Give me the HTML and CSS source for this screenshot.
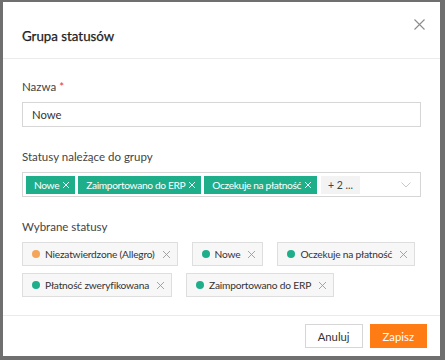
FILE: index.html
```html
<!DOCTYPE html>
<html lang="pl">
<head>
<meta charset="utf-8">
<link rel="stylesheet" href="styles.css">
</head>
<body>
<div class="modal">
  <div class="header">
    <h1 class="title">Grupa statusów</h1>
    <svg class="close" width="11" height="11" viewBox="0 0 11 11"><path d="M0.5 0.5L10.5 10.5M10.5 0.5L0.5 10.5" stroke="#8c8c8c" stroke-width="1.1" fill="none"/></svg>
  </div>
  <div class="body">
    <div class="field">
      <div class="label">Nazwa <span class="req">*</span></div>
      <div class="input">Nowe</div>
    </div>
    <div class="field">
      <div class="label">Statusy należące do grupy</div>
      <div class="select">
        <span class="tag">Nowe<svg class="tx" width="6" height="6" viewBox="0 0 6 6"><path d="M0 0L6 6M6 0L0 6" stroke="#fff" stroke-width="0.9"/></svg></span>
        <span class="tag">Zaimportowano do ERP<svg class="tx" width="6" height="6" viewBox="0 0 6 6"><path d="M0 0L6 6M6 0L0 6" stroke="#fff" stroke-width="0.9"/></svg></span>
        <span class="tag">Oczekuje na płatność<svg class="tx" width="6" height="6" viewBox="0 0 6 6"><path d="M0 0L6 6M6 0L0 6" stroke="#fff" stroke-width="0.9"/></svg></span>
        <span class="more">+ 2 ...</span>
        <svg class="chev" width="10" height="6" viewBox="0 0 10 6"><path d="M0.5 0.5L5 5L9.5 0.5" stroke="#c8c8c8" stroke-width="1" fill="none"/></svg>
      </div>
    </div>
    <div class="field last">
      <div class="label">Wybrane statusy</div>
      <div class="chips">
        <span class="chip"><i class="dot orange"></i>Niezatwierdzone (Allegro)<svg class="cx" width="7" height="7" viewBox="0 0 7 7"><path d="M0 0L7 7M7 0L0 7" stroke="#9a9a9a" stroke-width="0.9"/></svg></span>
        <span class="chip"><i class="dot"></i>Nowe<svg class="cx" width="7" height="7" viewBox="0 0 7 7"><path d="M0 0L7 7M7 0L0 7" stroke="#9a9a9a" stroke-width="0.9"/></svg></span>
        <span class="chip"><i class="dot"></i>Oczekuje na płatność<svg class="cx" width="7" height="7" viewBox="0 0 7 7"><path d="M0 0L7 7M7 0L0 7" stroke="#9a9a9a" stroke-width="0.9"/></svg></span>
        <span class="chip"><i class="dot"></i>Płatność zweryfikowana<svg class="cx" width="7" height="7" viewBox="0 0 7 7"><path d="M0 0L7 7M7 0L0 7" stroke="#9a9a9a" stroke-width="0.9"/></svg></span>
        <span class="chip"><i class="dot"></i>Zaimportowano do ERP<svg class="cx" width="7" height="7" viewBox="0 0 7 7"><path d="M0 0L7 7M7 0L0 7" stroke="#9a9a9a" stroke-width="0.9"/></svg></span>
      </div>
    </div>
  </div>
  <div class="footer">
    <button class="btn">Anuluj</button>
    <button class="btn primary">Zapisz</button>
  </div>
</div>
</body>
</html>
```
FILE: styles.css
```css
html, body { margin: 0; padding: 0; }
body {
  background: #6f6f6f;
  width: 445px;
  height: 360px;
  overflow: hidden;
  font-family: Lato, "Open Sans", sans-serif;
  color: #333;
}
.modal {
  margin: 2px 0 0 3px;
  width: 437px;
  height: 354px;
  background: #fff;
  display: flex;
  flex-direction: column;
}
.header {
  flex: none;
  height: 57px;
  box-sizing: border-box;
  border-bottom: 1px solid #ebebeb;
  display: flex;
  align-items: flex-end;
  padding: 0 19px 12px;
  position: relative;
}
.title {
  margin: 0;
  font-size: 13.3px;
  line-height: 20px;
  font-weight: 400;
  color: #222;
  -webkit-text-stroke: 0.25px #222;
}
.close { position: absolute; left: 411px; top: 17px; }
.body {
  flex: none;
  height: 257px;
  box-sizing: border-box;
  padding: 20px 19px 0;
  border-bottom: 1px solid #ebebeb;
}
.field { margin-bottom: 22px; }
.field.last { margin-bottom: 0; }
.label {
  font-size: 11.5px;
  color: #444;
  line-height: 16px;
  margin-bottom: 7px;
}
.req { color: #e33; }
.input {
  height: 25px;
  border: 1px solid #d6d6d6;
  box-sizing: border-box;
  padding: 0 9px;
  font-size: 11.3px;
  line-height: 23px;
  color: #333;
}
.select {
  height: 25px;
  border: 1px solid #d6d6d6;
  box-sizing: border-box;
  padding: 0 3px;
  display: flex;
  align-items: center;
  gap: 3px;
  position: relative;
}
.tag {
  display: inline-flex;
  align-items: center;
  background: #1fae8a;
  color: #fff;
  font-size: 10.2px;
  letter-spacing: -0.35px;
  height: 18px;
  padding: 0 6px 0 8px;
  white-space: nowrap;
}
.tx { margin-left: 4px; }
.more {
  background: #f3f3f3;
  color: #444;
  font-size: 10.5px;
  height: 18px;
  line-height: 18px;
  padding: 0 7px;
  margin-left: 1px;
  white-space: nowrap;
}
.chev { position: absolute; right: 9px; top: 9px; }
.chips {
  display: flex;
  flex-wrap: wrap;
  column-gap: 14px;
  row-gap: 7px;
}
.chip {
  display: inline-flex;
  align-items: center;
  height: 24px;
  box-sizing: border-box;
  border: 1px solid #dedede;
  background: #f7f7f7;
  padding: 0 7px 0 9px;
  font-size: 10.2px;
  letter-spacing: -0.2px;
  color: #333;
  white-space: nowrap;
}
.dot {
  width: 8px;
  height: 8px;
  border-radius: 50%;
  background: #1fae8a;
  margin-right: 5px;
}
.dot.orange { background: #f5a55a; }
.cx { margin-left: 8px; }
.footer {
  flex: 1;
  display: flex;
  justify-content: flex-end;
  align-items: flex-start;
  gap: 7px;
  padding: 8px 13px 0 0;
  box-sizing: border-box;
}
.btn {
  height: 24px;
  border: 1px solid #d6d6d6;
  background: #fff;
  font-family: inherit;
  font-size: 11.3px;
  color: #333;
  padding: 0 12px;
}
.btn.primary {
  background: #ff7b14;
  border-color: #ff7b14;
  color: #fff;
}
```
